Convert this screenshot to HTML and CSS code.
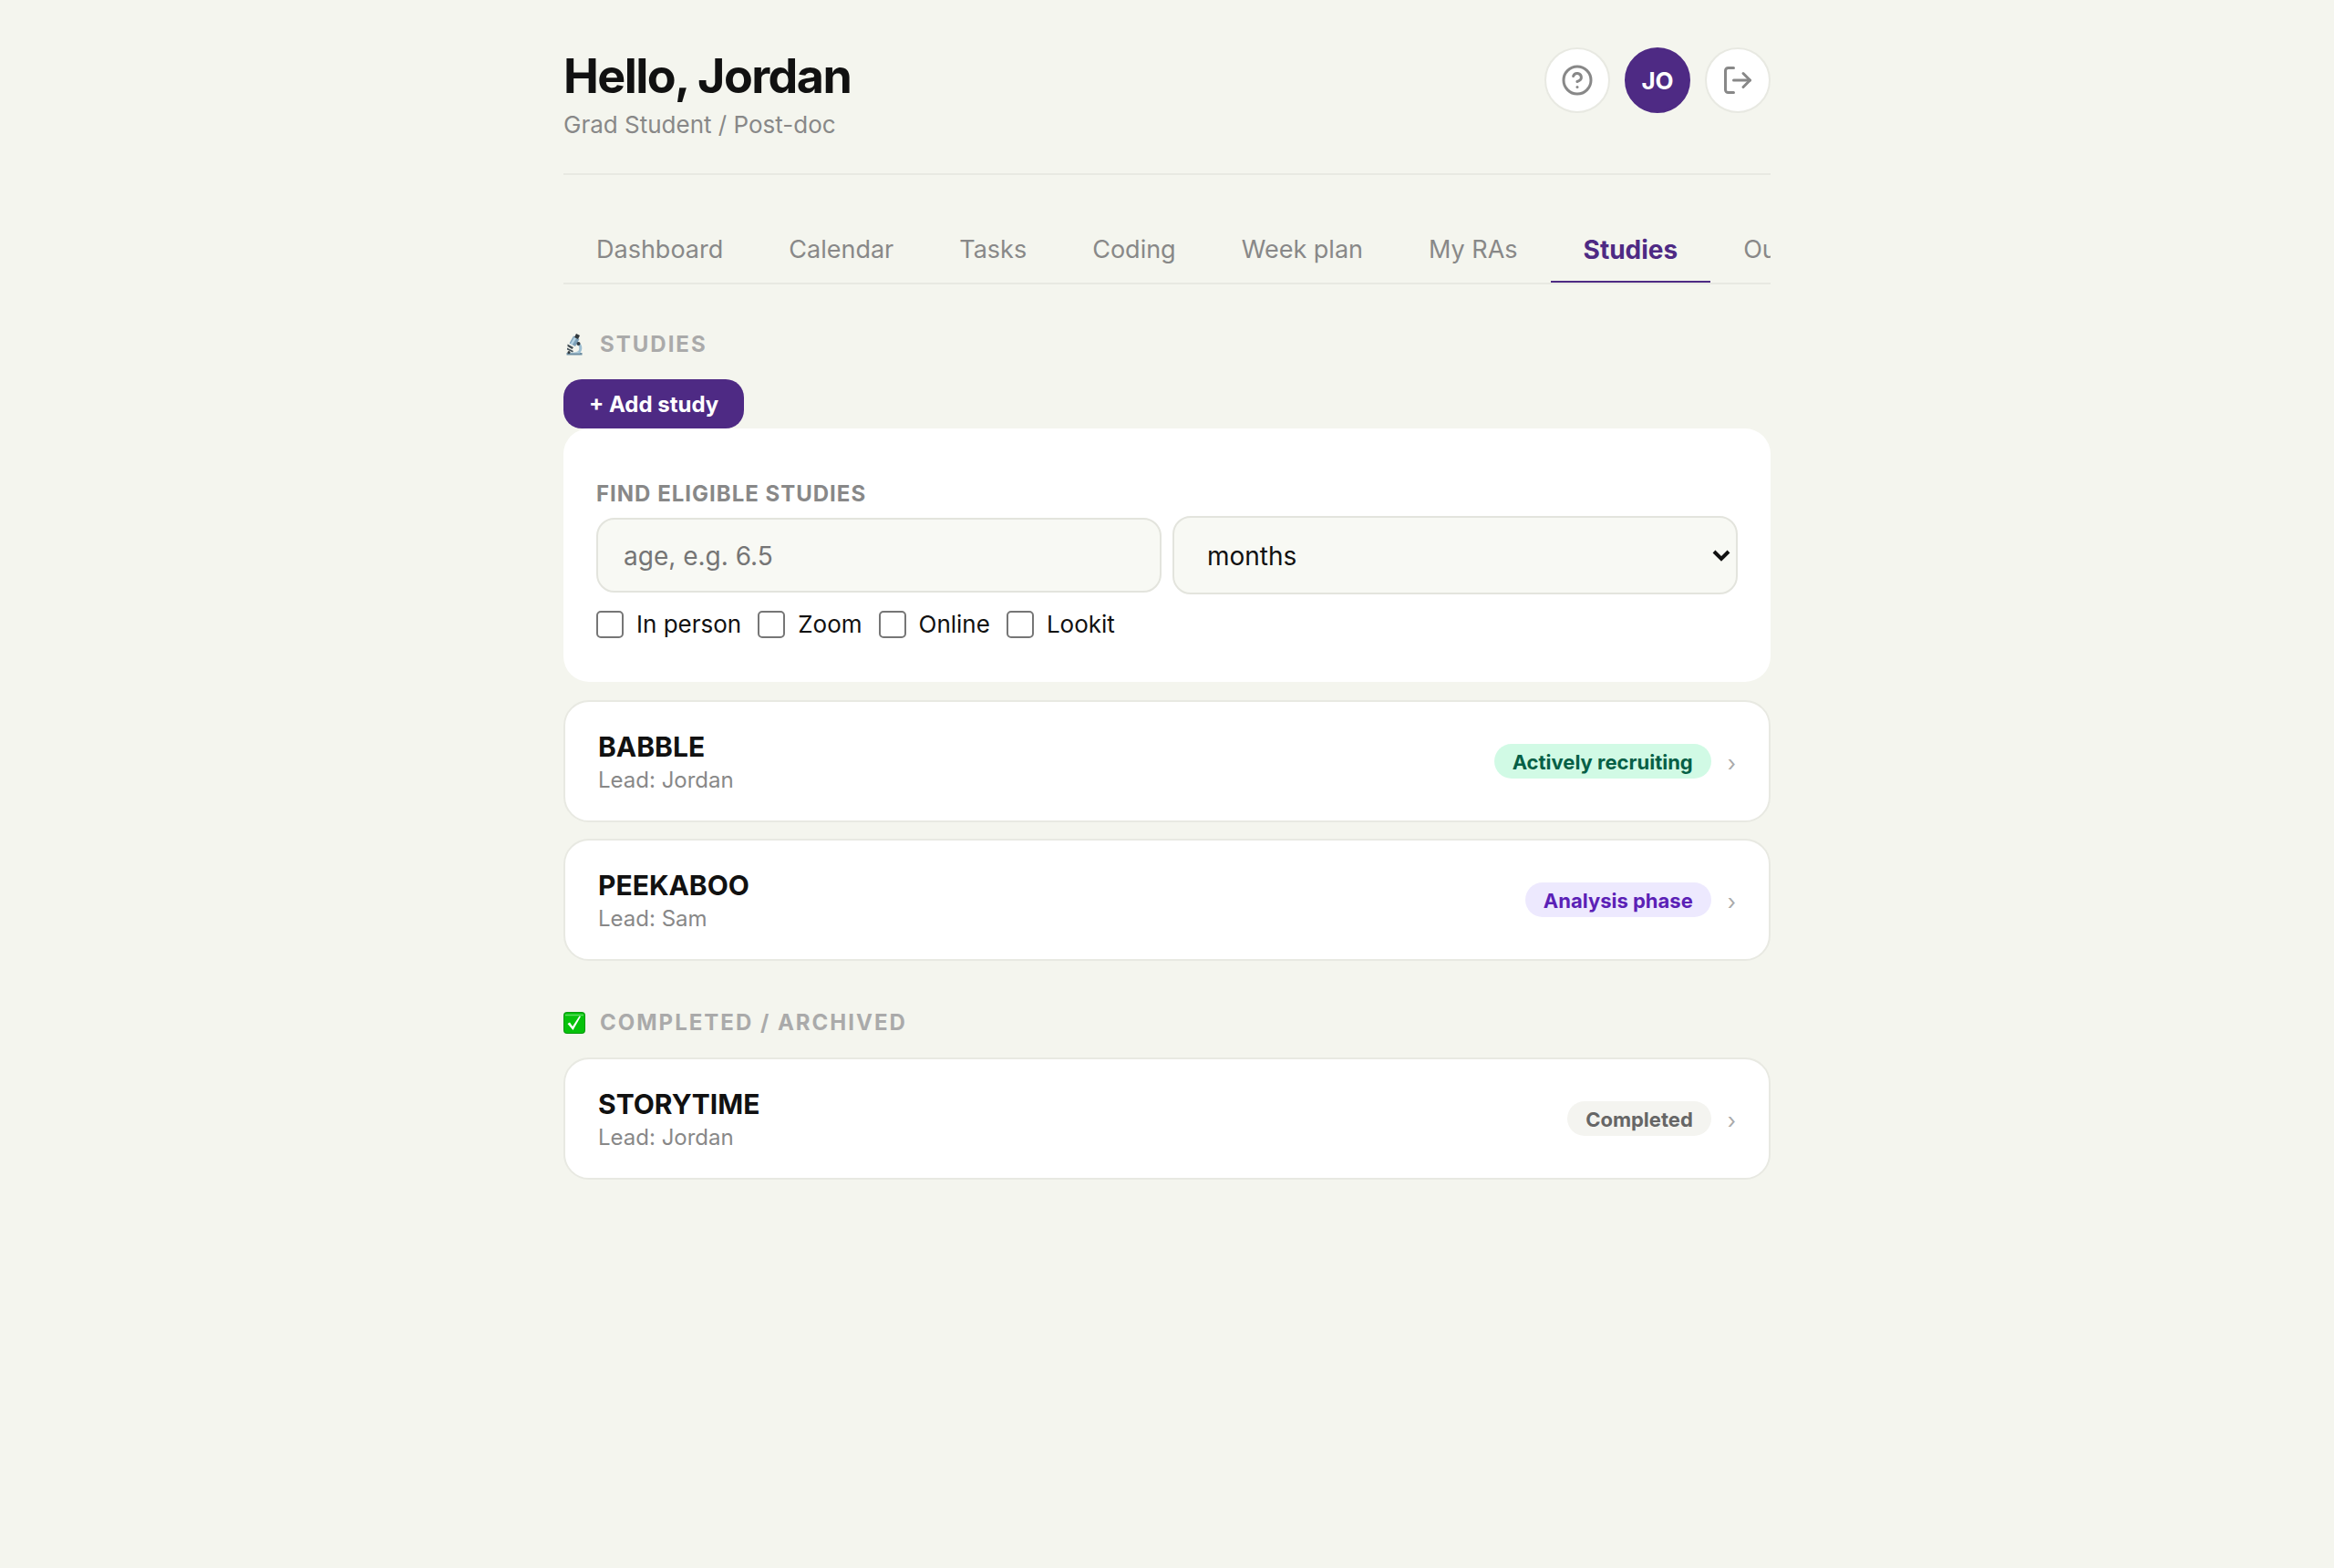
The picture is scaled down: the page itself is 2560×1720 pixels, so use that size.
FILE: index.html
```html
<!DOCTYPE html>
<html lang="en">
<head>
    <meta charset="UTF-8">
    <meta name="viewport" content="width=device-width, initial-scale=1.0">
    <title>Studies</title>
    <link rel="stylesheet" href="styles.css">
</head>
<body>
    <div class="app">
        <header class="header">
            <div>
                <h1>Hello, Jordan</h1>
                <p class="role">Grad Student / Post-doc</p>
            </div>
            <div class="header-actions">
                <button type="button" class="circle-btn" aria-label="Help">
                    <svg viewBox="0 0 24 24" class="icon">
                        <circle cx="12" cy="12" r="10"/>
                        <path d="M9.09 9a3 3 0 0 1 5.83 1c0 2-3 3-3 3"/>
                        <path d="M12 17h.01"/>
                    </svg>
                </button>
                <button type="button" class="circle-btn avatar">JO</button>
                <button type="button" class="circle-btn" aria-label="Sign out">
                    <svg viewBox="0 0 24 24" class="icon">
                        <path d="M9 21H5a2 2 0 0 1-2-2V5a2 2 0 0 1 2-2h4"/>
                        <path d="M16 17l5-5-5-5"/>
                        <path d="M21 12H9"/>
                    </svg>
                </button>
            </div>
        </header>

        <nav class="tabs">
            <button type="button" class="tab">Dashboard</button>
            <button type="button" class="tab">Calendar</button>
            <button type="button" class="tab">Tasks</button>
            <button type="button" class="tab">Coding</button>
            <button type="button" class="tab">Week plan</button>
            <button type="button" class="tab">My RAs</button>
            <button type="button" class="tab active">Studies</button>
            <button type="button" class="tab">Outreach</button>
        </nav>

        <main>
            <h2 class="section-label">
                <svg viewBox="0 0 24 24" class="emoji">
                    <path d="M3.500 21h17v2.500h-17z" fill="#6f8fa3"/>
                    <path d="M15 10.500c4.500 1.500 5 7 1.500 10.500" fill="none" stroke="#9fc0d3" stroke-width="3"/>
                    <path d="M7 20.500c3 .5 7 0 9-1.500l1 2.500h-10z" fill="#b4cedb"/>
                    <path d="M11 2.500l6.500 3.500-4.500 8-6.500-3.500z" fill="#7fa2ba"/>
                    <path d="M12 3.500l2.500 1-5 8-2-1z" fill="#b5d3e4"/>
                    <path d="M14 0l4 2-2 4-4-2z" fill="#30383d"/>
                    <path d="M4.500 11.500l6.500 3.500-1.500 2-5-3z" fill="#414c53"/>
                    <path d="M4 15.500l7 3.500-1 1.500-6-3z" fill="#46545d"/>
                    <circle cx="16.500" cy="11" r="2" fill="#303b43"/>
                    <circle cx="6" cy="20.500" r="1.500" fill="#30383d"/>
                </svg>
                Studies
            </h2>
            <button type="button" class="add-btn">+ Add study</button>

            <form class="finder">
                <label class="finder-label" for="age">Find eligible studies</label>
                <div class="finder-row">
                    <input type="text" id="age" class="field" placeholder="age, e.g. 6.5">
                    <div class="select-wrap">
                        <select class="field" aria-label="Age unit">
                            <option>months</option>
                            <option>years</option>
                        </select>
                        <svg viewBox="0 0 20 14" class="select-arrow"><path d="M2 3l8 8 8-8"/></svg>
                    </div>
                </div>
                <div class="modes">
                    <label><input type="checkbox">In person</label>
                    <label><input type="checkbox">Zoom</label>
                    <label><input type="checkbox">Online</label>
                    <label><input type="checkbox">Lookit</label>
                </div>
            </form>

            <div class="study-list">
                <a href="#babble" class="study">
                    <div>
                        <div class="study-name">BABBLE</div>
                        <div class="study-lead">Lead: Jordan</div>
                    </div>
                    <div class="study-status">
                        <span class="badge badge-active">Actively recruiting</span>
                        <span class="chevron">›</span>
                    </div>
                </a>
                <a href="#peekaboo" class="study">
                    <div>
                        <div class="study-name">PEEKABOO</div>
                        <div class="study-lead">Lead: Sam</div>
                    </div>
                    <div class="study-status">
                        <span class="badge badge-analysis">Analysis phase</span>
                        <span class="chevron">›</span>
                    </div>
                </a>
            </div>

            <h2 class="section-label archived">
                <svg viewBox="0 0 24 24" class="emoji">
                    <rect width="24" height="24" rx="4" fill="#0a9a10"/>
                    <rect x="1" y="1" width="22" height="22" rx="3" fill="#06c20c"/>
                    <path d="M2 3.500h20" stroke="#5fdd62" stroke-width="1.500"/>
                    <path d="M4.500 13l2.500-1.500 3 4.500 7.500-11.500 1.500.5-8.500 15z" fill="#fff"/>
                </svg>
                Completed / Archived
            </h2>
            <div class="study-list">
                <a href="#storytime" class="study">
                    <div>
                        <div class="study-name">STORYTIME</div>
                        <div class="study-lead">Lead: Jordan</div>
                    </div>
                    <div class="study-status">
                        <span class="badge badge-done">Completed</span>
                        <span class="chevron">›</span>
                    </div>
                </a>
            </div>
        </main>
    </div>
</body>
</html>
```

FILE: styles.css
```css
* {
    box-sizing: border-box;
    margin: 0;
    padding: 0;
}
body {
    font-family: Inter, "Liberation Sans", sans-serif;
    background: #f4f5ee;
    color: #111;
}
button, input, select {
    font-family: inherit;
}
.app {
    max-width: 1420px;
    margin: 0 auto;
    padding: 52px 48px;
}

/* header */
.header {
    display: flex;
    justify-content: space-between;
    align-items: flex-start;
    padding-bottom: 38px;
    margin-bottom: 48px;
    border-bottom: 2px solid #e8e9e2;
}
h1 {
    font-size: 52px;
    line-height: 63px;
    font-weight: 700;
    letter-spacing: -0.03em;
}
.role {
    margin-top: 6px;
    font-size: 26px;
    line-height: 31px;
    color: #888;
}
.header-actions {
    display: flex;
    gap: 16px;
}
.circle-btn {
    display: flex;
    align-items: center;
    justify-content: center;
    width: 72px;
    height: 72px;
    border: 2px solid #e8e9e2;
    border-radius: 50%;
    background: #fff;
    color: #888;
}
.avatar {
    background: #4e2a84;
    border-color: #4e2a84;
    color: #fff;
    font-size: 26px;
    font-weight: 700;
}
.icon {
    width: 36px;
    height: 36px;
    fill: none;
    stroke: currentColor;
    stroke-width: 2;
    stroke-linecap: round;
    stroke-linejoin: round;
}

/* tabs */
.tabs {
    display: flex;
    overflow: hidden;
    margin-bottom: 51px;
    border-bottom: 2px solid #e8e9e2;
}
.tab {
    flex-shrink: 0;
    padding: 17px 36px;
    border: none;
    border-bottom: 2px solid transparent;
    background: none;
    color: #888;
    font-size: 27px;
    line-height: 34px;
}
.tab.active {
    color: #4e2a84;
    font-size: 28px;
    font-weight: 700;
    border-bottom-color: #4e2a84;
}

.section-label {
    display: flex;
    align-items: center;
    gap: 16px;
    margin-bottom: 24px;
    color: #aaa;
    font-size: 24px;
    line-height: 29px;
    font-weight: 700;
    letter-spacing: 2px;
    text-transform: uppercase;
}
.section-label.archived {
    margin-top: 53px;
}
.emoji {
    width: 24px;
    height: 24px;
}
.add-btn {
    display: block;
    padding: 13px 28px 11px;
    border: none;
    border-radius: 20px;
    background: #4e2a84;
    color: #fff;
    font-size: 24px;
    line-height: 30px;
    font-weight: 700;
}

/* study finder */
.finder {
    padding: 57px 36px 47px;
    margin-bottom: 20px;
    border-radius: 28px;
    background: #fff;
}
.finder-label {
    display: block;
    margin-bottom: 10px;
    color: #888;
    font-size: 24px;
    line-height: 29px;
    font-weight: 700;
    letter-spacing: 1px;
    text-transform: uppercase;
}
.finder-row {
    display: grid;
    grid-template-columns: 1fr 1fr;
    align-items: center;
    gap: 12px;
}
.field {
    width: 100%;
    height: 82px;
    padding: 2px 28px 0;
    border: 2px solid #e3e4dd;
    border-radius: 20px;
    background: #f8f9f4;
    color: #111;
    font-size: 28px;
}
.field::placeholder {
    color: #757575;
}
.select-wrap {
    position: relative;
}
select.field {
    display: block;
    height: 86px;
    padding: 2px 36px 0;
    appearance: none;
}
.select-arrow {
    position: absolute;
    right: 8px;
    top: 36px;
    width: 20px;
    height: 14px;
    fill: none;
    stroke: #111;
    stroke-width: 4;
    pointer-events: none;
}
.modes {
    display: flex;
    gap: 18px;
    margin-top: 17px;
}
.modes label {
    display: flex;
    align-items: center;
    gap: 14px;
    font-size: 26px;
    line-height: 32px;
}
.modes input {
    appearance: none;
    width: 30px;
    height: 30px;
    border: 2px solid #767676;
    border-radius: 5px;
    background: #fff;
}

/* study cards */
.study-list {
    display: flex;
    flex-direction: column;
    gap: 18px;
}
.study {
    display: flex;
    justify-content: space-between;
    align-items: center;
    padding: 30px 36px;
    border: 2px solid #e8e9e2;
    border-radius: 28px;
    background: #fff;
    color: #111;
    text-decoration: none;
}
.study-name {
    font-size: 30px;
    line-height: 38px;
    font-weight: 700;
}
.study-lead {
    margin-top: 3px;
    color: #888;
    font-size: 24px;
    line-height: 29px;
}
.study-status {
    display: flex;
    align-items: center;
    gap: 18px;
}
.badge {
    padding: 7px 20px 5px;
    border-radius: 20px;
    font-size: 22px;
    line-height: 26px;
    font-weight: 700;
}
.badge-active {
    background: #d1fae5;
    color: #065f46;
}
.badge-analysis {
    background: #ede9fe;
    color: #5b21b6;
}
.badge-done {
    background: #f4f4f0;
    color: #666;
}
.chevron {
    padding-top: 4px;
    color: #aaa;
    font-size: 24px;
}
```
